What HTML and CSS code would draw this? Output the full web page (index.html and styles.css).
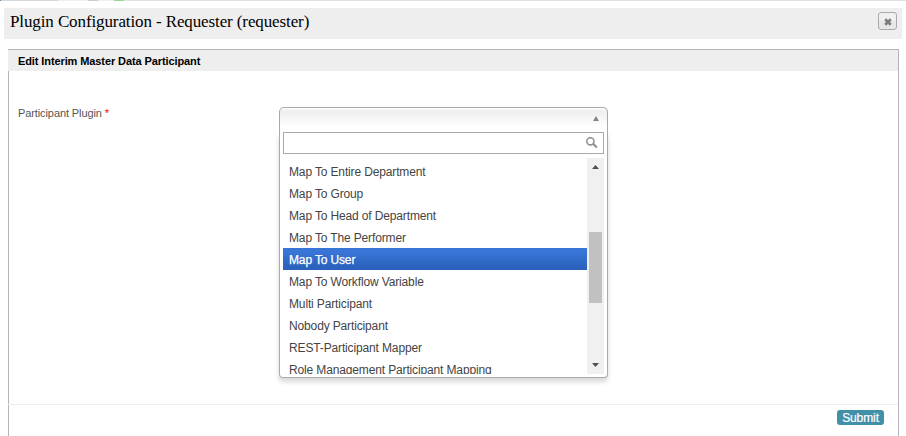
FILE: index.html
```html
<!DOCTYPE html>
<html lang="en">
<head>
<meta charset="utf-8">
<title>Plugin Configuration</title>
<link rel="stylesheet" href="styles.css">
</head>
<body>
<div class="strip"></div>
<header class="titlebar">
  <h1>Plugin Configuration - Requester (requester)</h1>
  <button class="close" aria-label="Close"><svg width="8" height="8" viewBox="0 0 8 8"><path d="M1.2 1.2l5.6 5.6M6.8 1.2L1.2 6.8" stroke="#7c7c7c" stroke-width="2.7"/></svg></button>
</header>
<main class="panel">
  <h2>Edit Interim Master Data Participant</h2>
  <div class="form">
    <label class="label">Participant Plugin <span class="req">*</span></label>
    <div class="chosen">
      <div class="single"><svg width="6" height="5" viewBox="0 0 6 5"><path d="M3 0l3 5H0z" fill="#858585"/></svg></div>
      <div class="drop">
        <div class="search"><svg width="12" height="12" viewBox="0 0 12 12" fill="none" stroke="#929292"><circle cx="4.4" cy="4.3" r="3.6" stroke-width="1.6"/><path d="M7.1 6.8l3.7 3.8" stroke-width="2.2"/></svg></div>
        <div class="results">
          <ul>
            <li>Map To Entire Department</li>
            <li>Map To Group</li>
            <li>Map To Head of Department</li>
            <li>Map To The Performer</li>
            <li class="active">Map To User</li>
            <li>Map To Workflow Variable</li>
            <li>Multi Participant</li>
            <li>Nobody Participant</li>
            <li>REST-Participant Mapper</li>
            <li>Role Management Participant Mapping</li>
          </ul>
          <div class="scroll">
            <svg width="7" height="4" viewBox="0 0 7 4"><path d="M3.5 0L7 4H0z" fill="#505050"/></svg>
            <div class="thumb"></div>
            <svg class="down" width="7" height="4" viewBox="0 0 7 4"><path d="M0 0h7L3.5 4z" fill="#505050"/></svg>
          </div>
        </div>
      </div>
    </div>
  </div>
  <footer class="actions"><button class="submit">Submit</button></footer>
</main>
</body>
</html>
```
FILE: styles.css
```css
* { box-sizing: border-box; }
body {
  margin: 0;
  height: 436px;
  overflow: hidden;
  background: #fff;
  font-family: "Liberation Sans", Arial, sans-serif;
  font-size: 11px;
  letter-spacing: -0.1px;
  color: #555;
}
.strip {
  height: 1px;
  background: linear-gradient(90deg, #7187a5 0 1px, #d3d8da 1px 58px, #eee 58px 88px, #ccc 88px 98px, #eee 98px 114px, #98d998 114px 124px, #e1e1e1 124px);
}
.titlebar {
  display: flex;
  justify-content: space-between;
  align-items: flex-start;
  height: 31px;
  margin: 7px 4px 0;
  padding: 4px 5px 0 6px;
  background: #eee;
}
h1 {
  margin: 0;
  font: 400 17px/20px "Liberation Serif", serif;
  letter-spacing: -0.11px;
  color: #000;
  white-space: nowrap;
}
.close {
  display: flex;
  align-items: center;
  justify-content: center;
  width: 19px;
  height: 18px;
  padding: 2px 0 0 1px;
  border: 1px solid #aaa;
  border-radius: 3px;
  background: linear-gradient(#f0f0f0 50%, #e7e7e7 50%);
}
.panel {
  height: 387px;
  margin: 10px 7px 0 8px;
  border: 1px solid #b4b4b4;
  border-bottom: 0;
}
h2 {
  height: 21px;
  margin: 0 0 0 -1px;
  padding-left: 10px;
  background: #eee;
  font-size: 11px;
  line-height: 23px;
  color: #000;
}
.form {
  display: flex;
  height: 333px;
  padding: 36px 0 0 9px;
}
.label { width: 261px; line-height: 13px; }
.req { color: #f00; }
.chosen { width: 329px; }
.single {
  display: flex;
  justify-content: flex-end;
  height: 25px;
  padding: 8px 8px 0 0;
  border: 1px solid #aaa;
  border-bottom: 0;
  border-radius: 5px 5px 0 0;
  background: linear-gradient(#fff 0, #eee 3px, #fff 80%);
}
.drop {
  height: 246px;
  padding: 0 3px 3px;
  border: 1px solid #aaa;
  border-top: 0;
  border-radius: 0 0 4px 4px;
  background: #fff;
  box-shadow: 0 4px 5px rgba(0, 0, 0, .15);
}
.search {
  display: flex;
  justify-content: flex-end;
  height: 22px;
  margin-bottom: 4px;
  padding: 4px 5px 0 0;
  border: 1px solid #aaa;
}
.results { display: flex; height: 216px; overflow: hidden; }
ul { flex: 1; margin: 0; padding: 2px 0 0; list-style: none; }
li {
  height: 22px;
  padding-left: 6px;
  font-size: 12px;
  line-height: 24px;
  letter-spacing: -0.14px;
  color: #444;
  white-space: nowrap;
}
.active {
  color: #fff;
  background: linear-gradient(#3875d7 20%, #2a62bc 90%);
  -webkit-text-stroke: 0.25px #fff;
}
.scroll {
  display: flex;
  flex-direction: column;
  align-items: center;
  width: 17px;
  padding: 7px 0;
  background: #f0f0f0;
}
.scroll svg { flex: none; margin-left: -1px; }
.thumb { width: 13px; height: 71px; margin-top: 63px; background: #c1c1c1; }
.scroll .down { margin-top: auto; }
.actions {
  display: flex;
  justify-content: flex-end;
  margin-left: -1px;
  padding: 5px 14px 0 0;
  border-top: 1px solid #eee;
}
.submit {
  width: 47px;
  height: 15px;
  padding: 1px 0 0;
  border: 0;
  border-radius: 3px;
  background: #4190a8;
  color: #fff;
  font: 12px/14px "Liberation Sans", Arial, sans-serif;
  letter-spacing: -0.1px;
  -webkit-text-stroke: 0.2px #fff;
}
```
